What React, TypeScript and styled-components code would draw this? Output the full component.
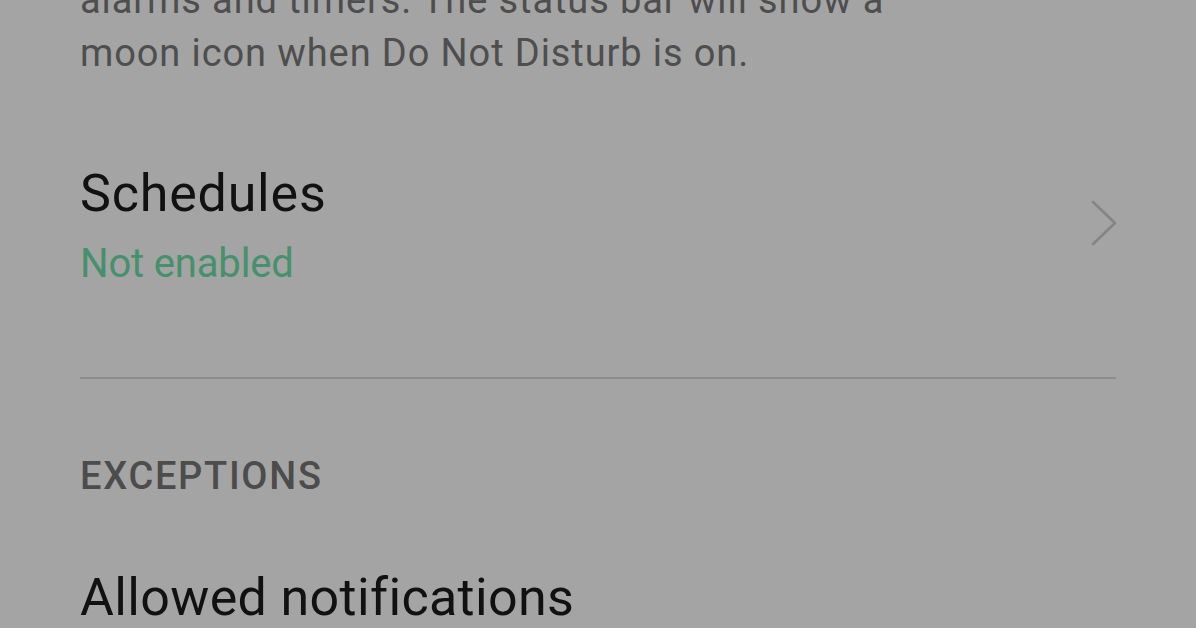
import React from 'react';
import styled, { createGlobalStyle } from 'styled-components';

const GlobalStyle = createGlobalStyle`
  html, body {
    margin: 0;
    padding: 0;
    background: #a4a4a4;
    overflow: hidden;
  }
  body {
    font-family: Roboto, 'Noto Sans', 'Liberation Sans', sans-serif;
  }
`;

const Screen = styled.div`
  display: flex;
  flex-direction: column;
  width: 1196px;
  height: 628px;
  padding: 0 80px;
  box-sizing: border-box;
  background: #a4a4a4;
  overflow: hidden;
`;

const Description = styled.p`
  margin: -26px 0 0;
  font-size: 38px;
  line-height: 53px;
  letter-spacing: 0.9px;
  color: #4e4e4e;
  width: 820px;
`;

const SettingRow = styled.div<{ $top: number }>`
  display: flex;
  align-items: center;
  justify-content: space-between;
  margin-top: ${(p) => p.$top}px;
`;

const RowText = styled.div`
  display: flex;
  flex-direction: column;
  gap: 16px;
`;

const Title = styled.div<{ $tracking?: number }>`
  font-size: 52px;
  line-height: 60px;
  letter-spacing: ${(p) => p.$tracking ?? 0.8}px;
  color: #111111;
`;

const Summary = styled.div`
  font-size: 40px;
  line-height: 48px;
  letter-spacing: -0.15px;
  color: #46906b;
`;

const Chevron = styled.svg`
  width: 30px;
  height: 50px;
  margin-right: -3px;
  margin-top: -6px;
`;

const Divider = styled.hr`
  margin: 89px 0 0;
  border: none;
  height: 2px;
  background: #8c8c8c;
`;

const SectionHeader = styled.div`
  margin-top: 75px;
  font-size: 38px;
  line-height: 44px;
  font-weight: 500;
  letter-spacing: 1.7px;
  color: #4c4c4c;
`;

export default function App() {
  return (
    <>
      <GlobalStyle />
      <Screen>
        <Description>
          alarms and timers. The status bar will show a moon icon when Do Not Disturb is on.
        </Description>

        <SettingRow $top={84}>
          <RowText>
            <Title>Schedules</Title>
            <Summary>Not enabled</Summary>
          </RowText>
          <Chevron viewBox="0 0 30 50" fill="none">
            <path d="M4 4 L26 25 L4 46" stroke="#858585" strokeWidth="2.6" strokeLinecap="round" strokeLinejoin="round" />
          </Chevron>
        </SettingRow>

        <Divider />

        <SectionHeader>EXCEPTIONS</SectionHeader>

        <SettingRow $top={70}>
          <RowText>
            <Title $tracking={0.35}>Allowed notifications</Title>
          </RowText>
        </SettingRow>
      </Screen>
    </>
  );
}
